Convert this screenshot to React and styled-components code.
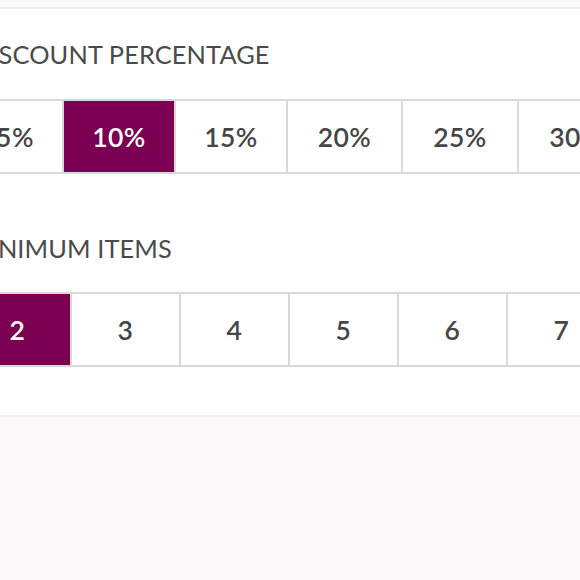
import React from "react";
import styled, { createGlobalStyle } from "styled-components";

const Global = createGlobalStyle`
  html, body { margin: 0; padding: 0; background: #faf8f8; }
  body { font-family: "Lato", "Open Sans", sans-serif; }
`;

const Page = styled.div`
  width: 580px;
  height: 580px;
  overflow: hidden;
  background: #faf8f8;
  padding-top: 7px;
  box-sizing: border-box;
`;

const Panel = styled.div`
  background: #ffffff;
  border-top: 2px solid #ececec;
  border-bottom: 2px solid #efeded;
  padding: 29px 0 48px;
`;

const Section = styled.section`
  display: flex;
  flex-direction: column;
  margin-top: ${(p) => p.$gap || 0}px;
`;

const Label = styled.h2`
  margin: 0 0 ${(p) => p.$below}px ${(p) => p.$indent}px;
  font-size: 25.4px;
  line-height: 32px;
  font-weight: 400;
  color: #4a4a4a;
  letter-spacing: 0.1px;
  white-space: nowrap;
`;

const OptionRow = styled.div`
  display: flex;
  margin-left: ${(p) => p.$indent}px;
  border-top: 2px solid #d9d9d9;
  border-bottom: 2px solid #d9d9d9;
  width: max-content;
`;

const Option = styled.div`
  flex: none;
  width: ${(p) => p.$w}px;
  height: 71px;
  box-sizing: border-box;
  display: flex;
  align-items: center;
  justify-content: center;
  border-right: 2px solid #d9d9d9;
  &:first-child { border-left: 2px solid #d9d9d9; }
  background: ${(p) => (p.$active ? "#7c0051" : "#ffffff")};
  color: ${(p) => (p.$active ? "#ffffff" : "#454545")};
  font-size: 26.5px;
  font-weight: 600;
  letter-spacing: 0.5px;
`;

const percents = [
  { v: "5%", w: 98 },
  { v: "10%", w: 112 },
  { v: "15%", w: 112 },
  { v: "20%", w: 115 },
  { v: "25%", w: 116 },
  { v: "30%", w: 116 },
];
const items = ["2", "3", "4", "5", "6", "7", "8"];

export default function App() {
  return (
    <>
      <Global />
      <Page>
        <Panel>
          <Section>
            <Label $indent={-28} $below={29}>DISCOUNT PERCENTAGE</Label>
            <OptionRow $indent={-34}>
              {percents.map((p) => (
                <Option key={p.v} $w={p.w} $active={p.v === "10%"}>{p.v}</Option>
              ))}
            </OptionRow>
          </Section>
          <Section $gap={58}>
            <Label $indent={-33} $below={28}>MINIMUM ITEMS</Label>
            <OptionRow $indent={-37}>
              {items.map((n) => (
                <Option key={n} $w={109} $active={n === "2"}>{n}</Option>
              ))}
            </OptionRow>
          </Section>
        </Panel>
      </Page>
    </>
  );
}
